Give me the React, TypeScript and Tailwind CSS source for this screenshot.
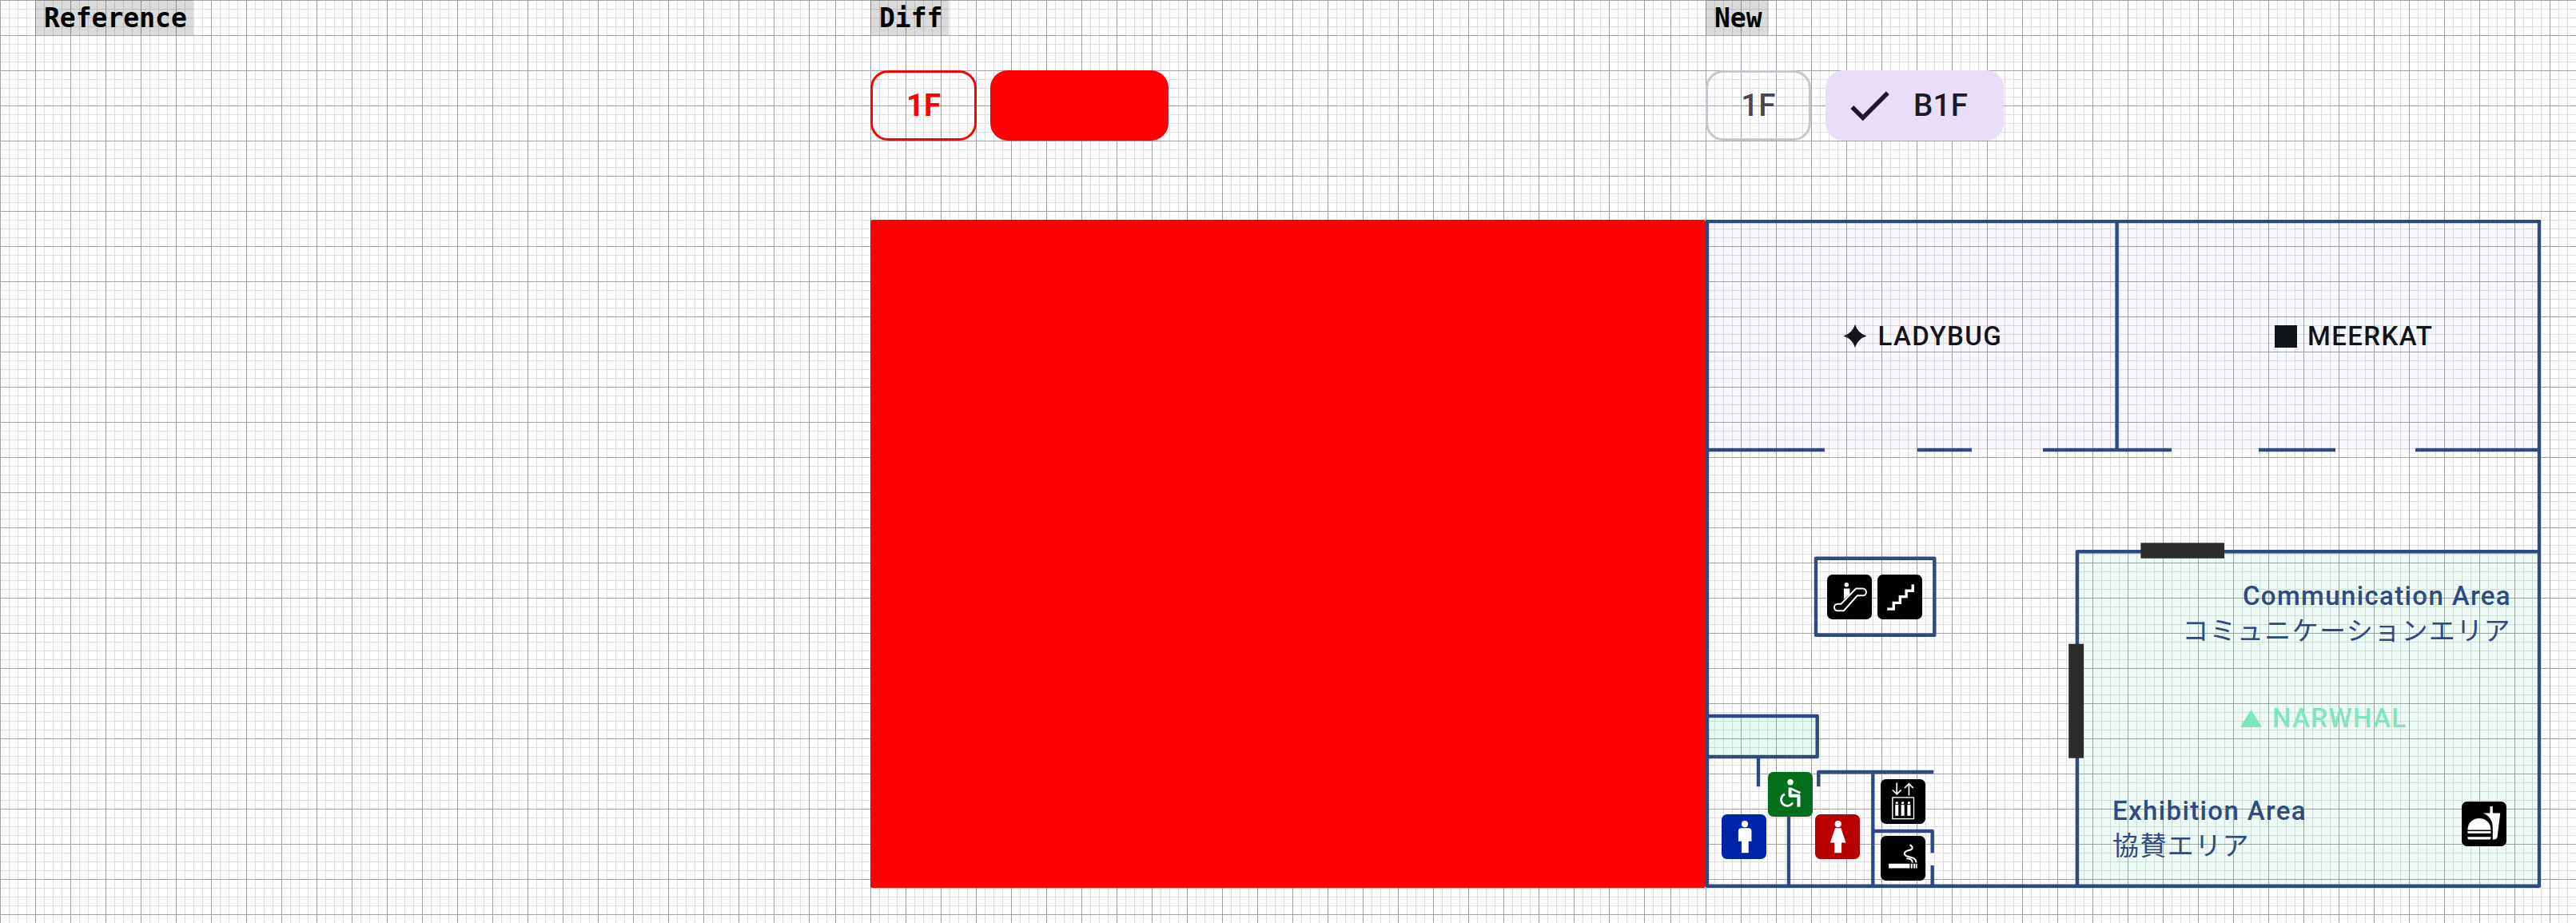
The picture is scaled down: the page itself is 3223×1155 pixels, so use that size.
import React from "react";

const grid =
  "[background-image:linear-gradient(#a3a3a3_1px,transparent_1px),linear-gradient(90deg,#a3a3a3_1px,transparent_1px),linear-gradient(#dedede_1px,transparent_1px),linear-gradient(90deg,#dedede_1px,transparent_1px)] [background-size:44px_44px,44px_44px,11px_11px,11px_11px]";

function Label({ children }: { children: React.ReactNode }) {
  return (
    <div className="flex h-[44px] w-fit items-center bg-[rgba(0,0,0,0.14)] pr-[8px] pl-[11px] font-['DejaVu_Sans_Mono',monospace] text-[33px] leading-none font-bold text-black">
      {children}
    </div>
  );
}

function Box({ color, className, children }: { color: string; className?: string; children: React.ReactNode }) {
  return (
    <svg viewBox="0 0 166 166" className={`h-[56px] w-[56px] shrink-0 ${className ?? ""}`}>
      <rect width="166" height="166" rx="20" fill={color} />
      {children}
    </svg>
  );
}

function FloorMap() {
  const wall = "#2e4a7e";
  return (
    <div className="relative h-[836px] w-[1045px] font-['Roboto',sans-serif] text-[33px] leading-none tracking-[1.375px]">
      <svg viewBox="0 0 1045 836" className="absolute inset-0 h-full w-full">
        <rect x="2" y="2" width="512.6" height="286" fill="rgba(150,70,210,0.05)" />
        <rect x="514.6" y="2" width="528.4" height="286" fill="rgba(60,90,255,0.035)" />
        <rect x="465" y="415.3" width="578" height="418.4" fill="rgba(0,180,100,0.065)" />
        <rect x="2" y="621" width="137.7" height="51" fill="rgba(0,210,120,0.1)" />
        <g fill="none" stroke={wall} strokeWidth="4.4" strokeLinejoin="round">
          <rect x="2" y="2" width="1041" height="831.7" />
          <path d="M514.6 2V288M2 288H149M265 288H333M422 288H583M692 288H788M888 288H1043" />
          <rect x="138" y="423.7" width="148.3" height="96" />
          <path d="M2 621H139.7V672H2" />
          <path d="M66 672V709.3M104 746V834" />
          <path d="M141.3 709.3V691H285.3M209.3 691V834" />
          <path d="M209.3 765H283.7V792.3M283.7 808V834" />
          <path d="M465 834V415.3H1043" />
        </g>
        <rect x="544.4" y="404.3" width="104.6" height="19.4" fill="#2b2c2a" />
        <rect x="454.2" y="530.7" width="18.8" height="143" fill="#2b2c2a" />
      </svg>

      <div className="absolute left-[172px] top-[129px] flex items-center gap-[13.5px] font-medium text-[#111418]">
        <svg viewBox="0 0 30 30" className="h-[29px] w-[30px]" fill="#111418">
          <path d="M15 0Q18.5 11.5 30 15Q18.5 18.5 15 30Q11.5 18.5 0 15Q11.5 11.5 15 0Z" />
        </svg>
        <span>LADYBUG</span>
      </div>
      <div className="absolute left-[712px] top-[129px] flex items-center gap-[13px] font-medium text-[#111418]">
        <div className="h-[28px] w-[28px] bg-[#111418]" />
        <span>MEERKAT</span>
      </div>

      <div className="absolute right-[37px] top-[454px] flex flex-col items-end gap-[9px] text-[#2e4a7e]">
        <span className="font-medium">Communication Area</span>
        <span className="font-['Noto_Sans_CJK_JP',sans-serif]">コミュニケーションエリア</span>
      </div>

      <div className="absolute left-[669px] top-[607px] flex items-center gap-[13px] font-medium text-[#7fe5bd]">
        <svg viewBox="0 0 27 22" className="h-[22px] w-[27px]" fill="#7fe5bd">
          <path d="M13.5 0L27 22H0Z" />
        </svg>
        <span>NARWHAL</span>
      </div>

      <div className="absolute left-[509px] top-[723px] flex flex-col gap-[9px] text-[#2e4a7e]">
        <span className="font-medium">Exhibition Area</span>
        <span className="font-['Noto_Sans_CJK_JP',sans-serif]">協賛エリア</span>
      </div>

      {/* escalator and stairs */}
      <div className="absolute left-[152px] top-[444px] flex gap-[7px]">
        <Box color="#000">
          <circle cx="72" cy="38" r="8" fill="#fff" />
          <path d="M62 52H84V72L62 92Z" fill="#fff" />
          <path d="M39 109H52L107 52H132A13 13 0 0 1 132 78H112L62 134H39A12.5 12.5 0 0 1 39 109Z" fill="none" stroke="#fff" strokeWidth="6" />
        </Box>
        <Box color="#000">
          <path d="M36 128H60V105H84V82H107V60H131V36" fill="none" stroke="#fff" strokeWidth="10" />
        </Box>
      </div>
      {/* man */}
      <Box color="#0024a8" className="absolute left-[20px] top-[744px]">
        <circle cx="86" cy="36" r="12" fill="#fff" />
        <path d="M62 62Q62 51 73 51H100Q111 51 111 62V100H100V143H74V100H62Z" fill="#fff" />
      </Box>
      {/* wheelchair */}
      <Box color="#016e1e" className="absolute left-[78px] top-[691px]">
        <circle cx="83" cy="38" r="11" fill="#fff" />
        <path d="M82 58V88H114V130" fill="none" stroke="#fff" strokeWidth="12" strokeLinejoin="round" />
        <path d="M85 62L120 78" fill="none" stroke="#fff" strokeWidth="8" />
        <path d="M62 82A23 23 0 1 0 92 114" fill="none" stroke="#fff" strokeWidth="8" />
      </Box>
      {/* woman */}
      <Box color="#b90000" className="absolute left-[137px] top-[744px]">
        <circle cx="85" cy="36" r="12" fill="#fff" />
        <path d="M74 51H96L114 105H98V143H72V105H56Z" fill="#fff" />
      </Box>
      {/* elevator */}
      <Box color="#000" className="absolute left-[219px] top-[700px]">
        <g fill="none" stroke="#fff" strokeWidth="5">
          <path d="M60 13V56M44 40L60 56L76 40" />
          <path d="M105 61V17M89 33L105 17L121 33" />
          <rect x="44" y="68" width="79" height="79" strokeWidth="4" />
        </g>
        <g fill="#fff">
          <circle cx="60" cy="88" r="5" /><rect x="54" y="95" width="12" height="41" />
          <circle cx="82" cy="88" r="5" /><rect x="76" y="95" width="12" height="41" />
          <circle cx="105" cy="88" r="5" /><rect x="99" y="95" width="12" height="41" />
        </g>
      </Box>
      {/* smoking */}
      <Box color="#000" className="absolute left-[219px] top-[771px]">
        <rect x="30" y="103" width="78" height="17" fill="#fff" />
        <rect x="112" y="103" width="6" height="17" fill="#fff" />
        <rect x="122" y="103" width="6" height="17" fill="#fff" />
        <rect x="130" y="103" width="5" height="17" fill="#fff" />
        <path d="M108 33C124 42 118 52 105 53C88 56 82 68 96 75C110 81 131 78 132 99M118 99C118 88 108 84 96 84" fill="none" stroke="#fff" strokeWidth="6" />
      </Box>
      {/* food */}
      <Box color="#000" className="absolute left-[946px] top-[728px]">
        <g fill="#fff">
          <path d="M22 105C22 75 45 62 65 62C85 62 108 75 108 105Z" />
          <rect x="22" y="110" width="86" height="8" />
          <path d="M22 131H108V134Q108 141 100 141H30Q22 141 22 134Z" />
          <rect x="105" y="18" width="10" height="27" />
          <path d="M78 43H143L132 132Q130 141 120 141H115V95C115 70 100 50 78 43Z" />
        </g>
      </Box>
    </div>
  );
}

export default function App() {
  return (
    <div className="flex h-[1155px] w-[3223px] overflow-hidden bg-white">
      <div className={`h-full w-[1045px] shrink-0 pl-[44px] ${grid}`}>
        <Label>Reference</Label>
      </div>

      <div className={`relative z-10 flex h-full w-[1045px] shrink-0 flex-col pl-[44px] ${grid}`}>
        <Label>Diff</Label>
        <div className="mt-[44px] flex h-[88px] gap-[17px]">
          <div className="flex h-[88px] w-[133px] items-center justify-center rounded-[22px] border-[3px] border-[#ff0000] font-['Roboto',sans-serif] text-[38.5px] font-bold text-[#ff0000]">
            1F
          </div>
          <div className="h-[88px] w-[223px] rounded-[22px] bg-[#ff0000]" />
        </div>
        <div className="mt-[99px] h-[836px] w-[1045px] shrink-0 rounded-[3px] bg-[#ff0000]" />
      </div>

      <div className={`h-full flex-1 pl-[44px] ${grid}`}>
        <Label>New</Label>
        <div className="mt-[44px] flex h-[88px] gap-[18px] font-['Roboto',sans-serif] text-[38.5px] font-medium tracking-[0.275px]">
          <div className="flex h-[88px] w-[132px] items-center justify-center rounded-[22px] border-[3px] border-[#cac4d0] text-[#49454f]">
            1F
          </div>
          <div className="flex h-[88px] w-[223px] items-center gap-[22px] rounded-[22px] bg-[#e8def8] pl-[22px] text-[#1d192b]">
            <svg viewBox="0 0 24 24" className="h-[66px] w-[66px]" fill="#1d192b">
              <path d="M9 16.17 4.83 12l-1.42 1.41L9 19 21 7l-1.41-1.41z" />
            </svg>
            B1F
          </div>
        </div>
        <div className="mt-[99px]">
          <FloorMap />
        </div>
      </div>
    </div>
  );
}
